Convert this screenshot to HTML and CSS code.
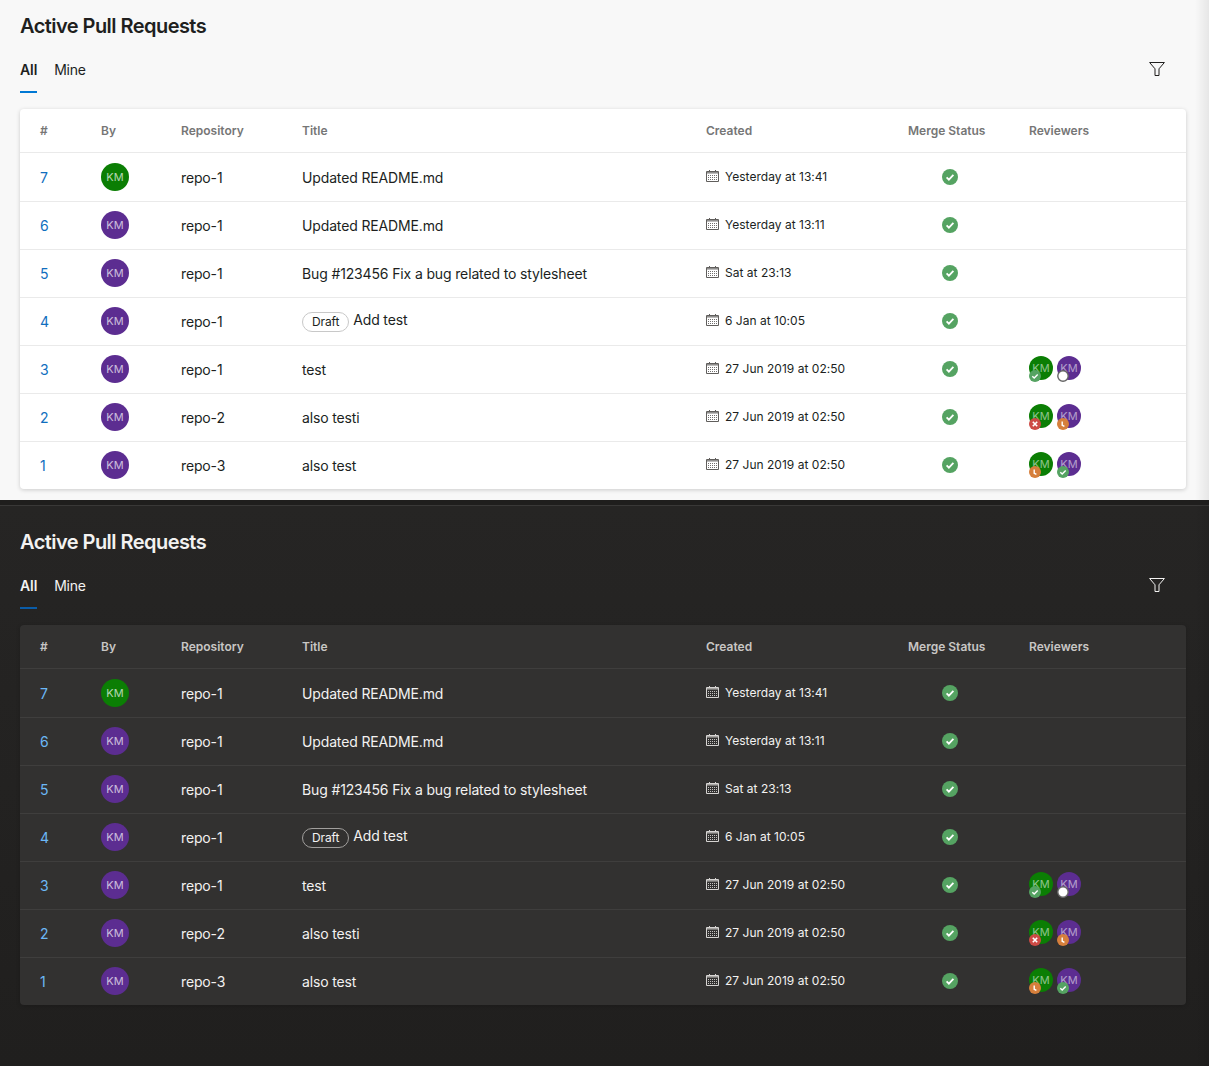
FILE: index.html
```html
<!DOCTYPE html>
<html lang="en">
<head>
<meta charset="utf-8">
<title>Active Pull Requests</title>
<link rel="stylesheet" href="styles.css">
</head>
<body>
<svg class="defs" width="0" height="0" aria-hidden="true">
  <symbol id="cal" viewBox="0 0 13 12">
    <path d="M.5 1.5h12v10H.5z" fill="none" stroke="currentColor"/>
    <path d="M1 2h11v1.6H1z" fill="currentColor" fill-opacity=".7"/>
    <path d="M3 0h1v2H3zM9 0h1v2H9z" fill="currentColor"/>
    <path d="M2 5.5h9M2 7.5h9M2 9.5h9" stroke="currentColor" stroke-width=".9" stroke-dasharray="1 1" fill="none"/>
  </symbol>
  <symbol id="ok" viewBox="0 0 16 16">
    <circle cx="8" cy="8" r="8" fill="#55a362"/>
    <path d="M4.6 8.3l2.3 2.3 4.5-4.7" fill="none" stroke="#fff" stroke-width="1.8"/>
  </symbol>
  <symbol id="bad" viewBox="0 0 12 12">
    <circle cx="6" cy="6" r="6" fill="#cd4a45"/>
    <path d="M3.8 3.8l4.4 4.4M8.2 3.8l-4.4 4.4" fill="none" stroke="#fff" stroke-width="1.6"/>
  </symbol>
  <symbol id="wait" viewBox="0 0 12 12">
    <circle cx="6" cy="6" r="6" fill="#d67f3c"/>
    <path d="M5.2 3.4v3.8l2.2 1.1" fill="none" stroke="#fff" stroke-width="1.4"/>
  </symbol>
  <symbol id="yes" viewBox="0 0 12 12">
    <circle cx="6" cy="6" r="6" fill="#55a362"/>
    <path d="M3.3 6.2l1.9 1.8 3.5-3.6" fill="none" stroke="#fff" stroke-width="1.4"/>
  </symbol>
  <symbol id="none" viewBox="0 0 12 12">
    <circle class="none-dot" cx="6" cy="6" r="5.2" stroke="#666" stroke-width="1.4"/>
  </symbol>
  <symbol id="filter" viewBox="0 0 16 14">
    <path d="M.6.5h14.8L10 6.8v6.7H6V6.8z" fill="none" stroke="currentColor"/>
  </symbol>
</svg>

<section class="panel light">
  <h1 class="heading">Active Pull Requests</h1>
  <div class="tabbar">
    <div class="tabs">
      <a class="tab tab-active">All</a>
      <a class="tab">Mine</a>
    </div>
    <svg class="filter"><use href="#filter"/></svg>
  </div>
  <div class="card">
    <div class="row head">
      <div>#</div><div>By</div><div>Repository</div><div>Title</div><div>Created</div><div>Merge Status</div><div>Reviewers</div>
    </div>
    <div class="row">
      <a class="num">7</a><div><span class="avatar green">KM</span></div><div>repo-1</div><div>Updated README.md</div>
      <div class="created"><svg class="cal"><use href="#cal"/></svg>Yesterday at 13:41</div><div class="merge"><svg class="check"><use href="#ok"/></svg></div><div></div>
    </div>
    <div class="row">
      <a class="num">6</a><div><span class="avatar purple">KM</span></div><div>repo-1</div><div>Updated README.md</div>
      <div class="created"><svg class="cal"><use href="#cal"/></svg>Yesterday at 13:11</div><div class="merge"><svg class="check"><use href="#ok"/></svg></div><div></div>
    </div>
    <div class="row">
      <a class="num">5</a><div><span class="avatar purple">KM</span></div><div>repo-1</div><div>Bug #123456 Fix a bug related to stylesheet</div>
      <div class="created"><svg class="cal"><use href="#cal"/></svg>Sat at 23:13</div><div class="merge"><svg class="check"><use href="#ok"/></svg></div><div></div>
    </div>
    <div class="row">
      <a class="num">4</a><div><span class="avatar purple">KM</span></div><div>repo-1</div><div class="draft-cell"><span class="draft">Draft</span><span class="draft-title">Add test</span></div>
      <div class="created"><svg class="cal"><use href="#cal"/></svg>6 Jan at 10:05</div><div class="merge"><svg class="check"><use href="#ok"/></svg></div><div></div>
    </div>
    <div class="row">
      <a class="num">3</a><div><span class="avatar purple">KM</span></div><div>repo-1</div><div>test</div>
      <div class="created"><svg class="cal"><use href="#cal"/></svg>27 Jun 2019 at 02:50</div><div class="merge"><svg class="check"><use href="#ok"/></svg></div>
      <div class="reviewers"><span class="rev green">KM<svg class="vote"><use href="#yes"/></svg></span><span class="rev purple">KM<svg class="vote"><use href="#none"/></svg></span></div>
    </div>
    <div class="row">
      <a class="num">2</a><div><span class="avatar purple">KM</span></div><div>repo-2</div><div>also testi</div>
      <div class="created"><svg class="cal"><use href="#cal"/></svg>27 Jun 2019 at 02:50</div><div class="merge"><svg class="check"><use href="#ok"/></svg></div>
      <div class="reviewers"><span class="rev green">KM<svg class="vote"><use href="#bad"/></svg></span><span class="rev purple">KM<svg class="vote"><use href="#wait"/></svg></span></div>
    </div>
    <div class="row">
      <a class="num">1</a><div><span class="avatar purple">KM</span></div><div>repo-3</div><div>also test</div>
      <div class="created"><svg class="cal"><use href="#cal"/></svg>27 Jun 2019 at 02:50</div><div class="merge"><svg class="check"><use href="#ok"/></svg></div>
      <div class="reviewers"><span class="rev green">KM<svg class="vote"><use href="#wait"/></svg></span><span class="rev purple">KM<svg class="vote"><use href="#yes"/></svg></span></div>
    </div>
  </div>
</section>

<section class="panel dark">
  <h1 class="heading">Active Pull Requests</h1>
  <div class="tabbar">
    <div class="tabs">
      <a class="tab tab-active">All</a>
      <a class="tab">Mine</a>
    </div>
    <svg class="filter"><use href="#filter"/></svg>
  </div>
  <div class="card">
    <div class="row head">
      <div>#</div><div>By</div><div>Repository</div><div>Title</div><div>Created</div><div>Merge Status</div><div>Reviewers</div>
    </div>
    <div class="row">
      <a class="num">7</a><div><span class="avatar green">KM</span></div><div>repo-1</div><div>Updated README.md</div>
      <div class="created"><svg class="cal"><use href="#cal"/></svg>Yesterday at 13:41</div><div class="merge"><svg class="check"><use href="#ok"/></svg></div><div></div>
    </div>
    <div class="row">
      <a class="num">6</a><div><span class="avatar purple">KM</span></div><div>repo-1</div><div>Updated README.md</div>
      <div class="created"><svg class="cal"><use href="#cal"/></svg>Yesterday at 13:11</div><div class="merge"><svg class="check"><use href="#ok"/></svg></div><div></div>
    </div>
    <div class="row">
      <a class="num">5</a><div><span class="avatar purple">KM</span></div><div>repo-1</div><div>Bug #123456 Fix a bug related to stylesheet</div>
      <div class="created"><svg class="cal"><use href="#cal"/></svg>Sat at 23:13</div><div class="merge"><svg class="check"><use href="#ok"/></svg></div><div></div>
    </div>
    <div class="row">
      <a class="num">4</a><div><span class="avatar purple">KM</span></div><div>repo-1</div><div class="draft-cell"><span class="draft">Draft</span><span class="draft-title">Add test</span></div>
      <div class="created"><svg class="cal"><use href="#cal"/></svg>6 Jan at 10:05</div><div class="merge"><svg class="check"><use href="#ok"/></svg></div><div></div>
    </div>
    <div class="row">
      <a class="num">3</a><div><span class="avatar purple">KM</span></div><div>repo-1</div><div>test</div>
      <div class="created"><svg class="cal"><use href="#cal"/></svg>27 Jun 2019 at 02:50</div><div class="merge"><svg class="check"><use href="#ok"/></svg></div>
      <div class="reviewers"><span class="rev green">KM<svg class="vote"><use href="#yes"/></svg></span><span class="rev purple">KM<svg class="vote"><use href="#none"/></svg></span></div>
    </div>
    <div class="row">
      <a class="num">2</a><div><span class="avatar purple">KM</span></div><div>repo-2</div><div>also testi</div>
      <div class="created"><svg class="cal"><use href="#cal"/></svg>27 Jun 2019 at 02:50</div><div class="merge"><svg class="check"><use href="#ok"/></svg></div>
      <div class="reviewers"><span class="rev green">KM<svg class="vote"><use href="#bad"/></svg></span><span class="rev purple">KM<svg class="vote"><use href="#wait"/></svg></span></div>
    </div>
    <div class="row">
      <a class="num">1</a><div><span class="avatar purple">KM</span></div><div>repo-3</div><div>also test</div>
      <div class="created"><svg class="cal"><use href="#cal"/></svg>27 Jun 2019 at 02:50</div><div class="merge"><svg class="check"><use href="#ok"/></svg></div>
      <div class="reviewers"><span class="rev green">KM<svg class="vote"><use href="#wait"/></svg></span><span class="rev purple">KM<svg class="vote"><use href="#yes"/></svg></span></div>
    </div>
  </div>
</section>
</body>
</html>
```
FILE: styles.css
```css
* { box-sizing: border-box; }
html, body { margin: 0; padding: 0; }
body {
  width: 1209px;
  height: 1066px;
  overflow: hidden;
  font-family: Inter, "Liberation Sans", sans-serif;
  font-size: 14px;
  -webkit-font-smoothing: antialiased;
}
.defs { position: absolute; }

.panel {
  position: relative;
  padding: 0 23px 0 20px;
}
.panel::after {
  content: "";
  position: absolute;
  top: 0;
  right: 0;
  bottom: 0;
  width: 14px;
  pointer-events: none;
}
.light {
  height: 500px;
  padding-top: 14px;
  background: #f8f8f8;
  color: #201f1e;
  --card: #fff;
  --line: #eaeaea;
  --head: #767676;
  --link: #106ebe;
  --cal: #605e5c;
  --draft-line: #c8c8c8;
  --none: #fff;
}
.light::after { background: linear-gradient(90deg, rgba(0,0,0,0), rgba(0,0,0,.07)); }
.dark {
  height: 566px;
  padding-top: 25px;
  background: linear-gradient(#262524, #201f1e);
  color: #f3f2f1;
  border-top: 5px solid #1f1e1d;
  --card: #323130;
  --line: #3f3e3d;
  --head: #c8c6c4;
  --link: #6cb8f6;
  --cal: #d6d4d2;
  --draft-line: #a19f9d;
  --none: #fff;
}
.dark::before {
  content: "";
  position: absolute;
  top: 0;
  left: 0;
  right: 0;
  height: 1px;
  background: #393837;
}
.dark::after { background: linear-gradient(90deg, rgba(0,0,0,0), rgba(0,0,0,.08)); }

.heading {
  margin: 0;
  font-size: 20px;
  line-height: 25px;
  font-weight: 600;
  letter-spacing: -0.55px;
}
.tabbar {
  display: flex;
  justify-content: space-between;
  align-items: flex-start;
  margin-top: 21px;
  height: 49px;
  letter-spacing: -0.25px;
}
.tabs { display: flex; gap: 17px; }
.tab {
  height: 33px;
  line-height: 20px;
  font-size: 14px;
}
.tab-active {
  font-weight: 600;
  border-bottom: 2px solid #0078d4;
  height: 33px;
  letter-spacing: -0.1px;
}
.dark .tab-active { border-bottom-color: #0a5ca8; }
.filter {
  width: 16px;
  height: 14px;
  margin: 2px 21px 0 0;
}

.card {
  background: var(--card);
  border-radius: 4px;
  box-shadow: 0 1px 4px rgba(0,0,0,.18);
}
.row {
  display: grid;
  grid-template-columns: 61px 80px 121px 404px 202px 121px 1fr;
  align-items: center;
  height: 48px;
  padding-left: 20px;
  border-bottom: 1px solid var(--line);
  letter-spacing: -0.14px;
}
.row:last-child { border-bottom: 0; height: 47px; }
.head {
  height: 44px;
  margin-bottom: 1px;
  font-size: 12px;
  font-weight: 600;
  color: var(--head);
  letter-spacing: 0;
}
.num { color: var(--link); }
.avatar {
  display: flex;
  align-items: center;
  justify-content: center;
  width: 28px;
  height: 28px;
  border-radius: 50%;
  font-size: 11px;
  letter-spacing: 0;
  color: rgba(255,255,255,.7);
  margin-top: -1px;
}
.green { background: #0b7e04; }
.purple { background: #5c2d91; }
.created {
  display: flex;
  align-items: center;
  font-size: 12px;
  letter-spacing: 0.02px;
  margin-top: -3px;
}
.cal {
  width: 13px;
  height: 12px;
  margin-right: 6px;
  color: var(--cal);
  position: relative;
  top: 0;
}
.merge { padding-left: 34px; display: flex; margin-top: -1px; }
.check { width: 16px; height: 16px; }
.draft-cell { display: flex; align-items: center; }
.draft {
  border: 1px solid var(--draft-line);
  border-radius: 10px;
  font-size: 12px;
  line-height: 18px;
  height: 20px;
  padding: 0 9px;
  margin-right: 4px;
  position: relative;
  top: 0;
}
.draft-title { position: relative; top: -2px; }
.reviewers { display: flex; gap: 4px; margin-top: -3px; }
.rev {
  position: relative;
  display: flex;
  align-items: center;
  justify-content: center;
  width: 24px;
  height: 24px;
  border-radius: 50%;
  font-size: 11px;
  letter-spacing: 0;
  color: rgba(255,255,255,.55);
}
.vote {
  position: absolute;
  left: 0;
  bottom: -2px;
  width: 12px;
  height: 12px;
}
.none-dot { fill: var(--none); }
```
